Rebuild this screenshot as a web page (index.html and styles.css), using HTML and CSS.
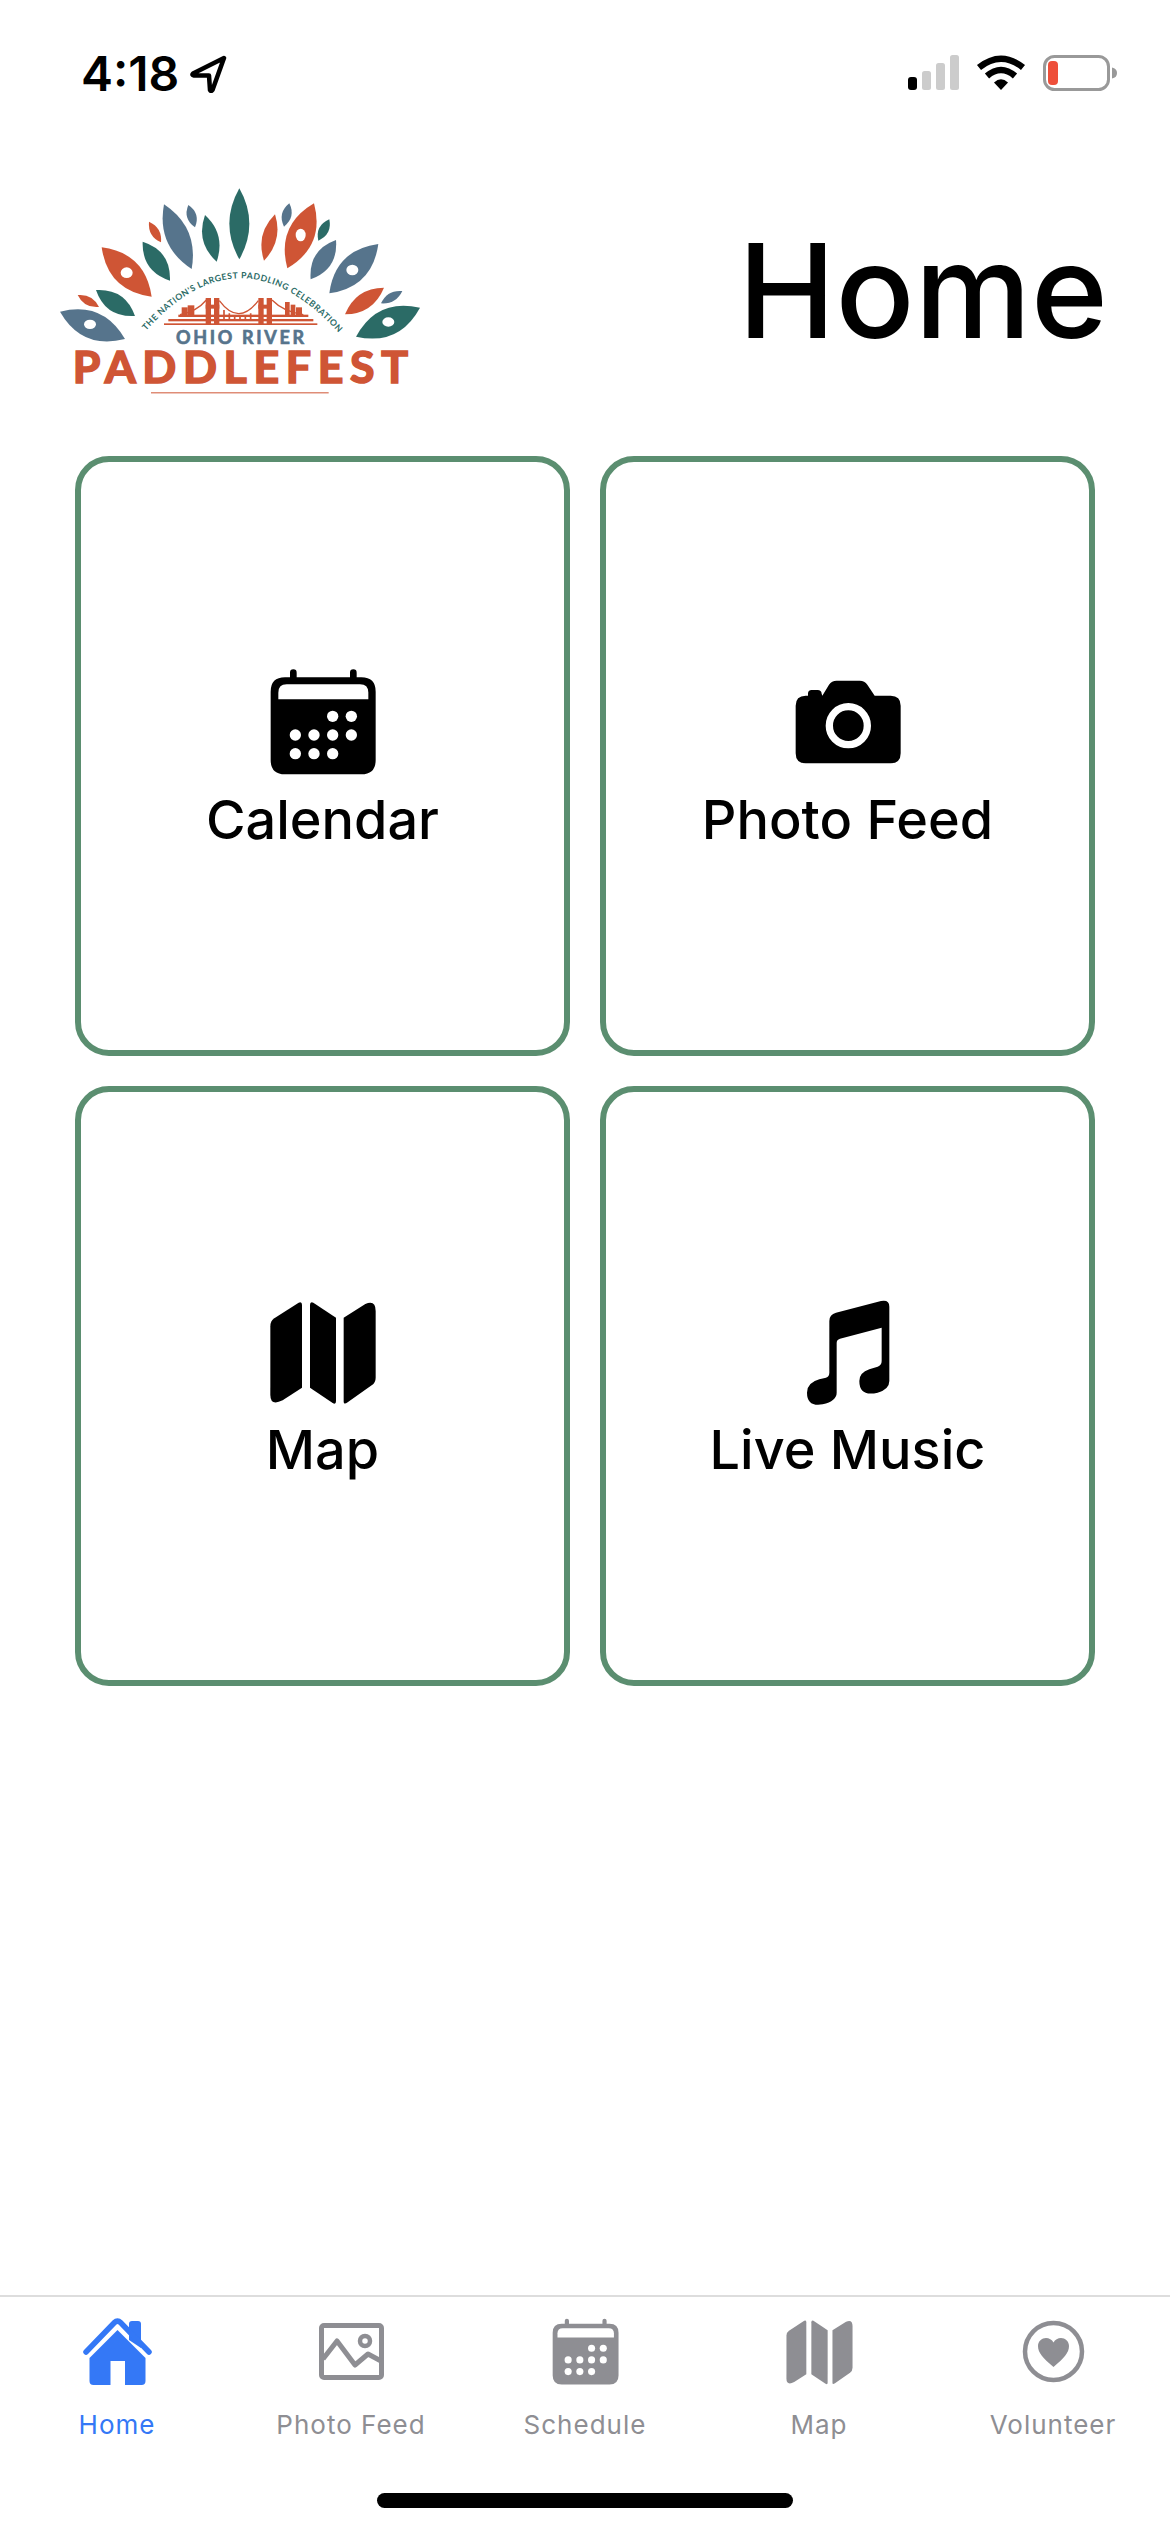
FILE: index.html
```html
<!DOCTYPE html>
<html lang="en">
<head>
    <meta charset="UTF-8">
    <meta name="viewport" content="width=device-width, initial-scale=1.0">
    <title>Home</title>
    <link rel="stylesheet" href="styles.css">
</head>
<body>

    <!-- icons used more than once -->
    <svg class="icon-defs" aria-hidden="true">
        <symbol id="icon-calendar" viewBox="260 75 330 330">
            <path fill="currentColor" d="M326 112V98a10 10 0 0 1 20 0V112H506V98a10 10 0 0 1 20 0V112H540Q583 112 583 155V360Q583 403 540 403H311Q268 403 268 360V155Q268 112 311 112Z"/>
            <path fill="#fff" d="M291 178V158Q291 133 316 133H536Q561 133 561 158V178Z"/>
            <g fill="#fff">
                <circle cx="454" cy="229" r="17"/><circle cx="510" cy="229" r="17"/>
                <circle cx="342" cy="285" r="17"/><circle cx="398" cy="285" r="17"/><circle cx="454" cy="285" r="17"/><circle cx="510" cy="285" r="17"/>
                <circle cx="342" cy="341" r="17"/><circle cx="398" cy="341" r="17"/><circle cx="454" cy="341" r="17"/>
            </g>
        </symbol>
        <symbol id="icon-map" viewBox="111 72 330 330">
            <path fill="currentColor" d="M213 102V350L155 388Q118 406 118 372V166Q118 150 130 142L203 95Q213 90 213 102Z"/>
            <path fill="currentColor" d="M237 102Q237 90 247 95L315 140V390Q315 402 305 396L237 350Z"/>
            <path fill="currentColor" d="M338 140L403 99Q434 86 434 120V320Q434 335 422 343L350 394Q338 402 338 392Z"/>
        </symbol>
    </svg>

    <div class="status-bar">
        <div class="status-left">
            <span class="status-time">4:18</span>
            <svg class="status-arrow" width="38" height="38" viewBox="0 0 38 38">
                <path d="M34 3L3 18.5Q1.5 20 4 20.5L19 20.500L20 35Q21 37 22.500 35Z" fill="none" stroke="#000" stroke-width="4.500" stroke-linejoin="round"/>
            </svg>
        </div>
        <div class="status-right">
            <svg width="51" height="36" viewBox="0 0 51 36">
                <rect x="0" y="22" width="9" height="13" rx="3" fill="#000"/>
                <rect x="14" y="16" width="9" height="19" rx="2.500" fill="#ccc"/>
                <rect x="28" y="8" width="9" height="27" rx="2.500" fill="#ccc"/>
                <rect x="42" y="0" width="9" height="35" rx="2.500" fill="#ccc"/>
            </svg>
            <svg width="50" height="36" viewBox="0 0 50 36">
                <path d="M3 12.500Q25 -5 47 12.500" fill="none" stroke="#000" stroke-width="6.500"/>
                <path d="M11 21Q25 9 39 21" fill="none" stroke="#000" stroke-width="6.500"/>
                <path d="M18 27.500Q25 21 32 27.500L25 35Z" fill="#000"/>
            </svg>
            <svg width="74" height="36" viewBox="0 0 74 36">
                <rect x="1.500" y="1.500" width="64" height="33" rx="10" fill="none" stroke="#999" stroke-width="3"/>
                <rect x="5" y="6" width="10" height="24" rx="4" fill="#ee4f3a"/>
                <path d="M69 12.500Q74 13.500 74 18Q74 22.500 69 23.500Z" fill="#999"/>
            </svg>
        </div>
    </div>

    <header class="page-header">
        <svg class="logo" width="400" height="240" viewBox="0 0 1200 720">
            <g fill="#56748c">
                <path d="M372 103Q349 227 455 297Q477 173 372 103Z"/>
                <path d="M445 105Q428 146 465 172Q482 130 445 105Z"/>
                <path d="M748 100Q712 129 732 170Q768 141 748 100Z"/>
                <path d="M888 210Q805 240 812 328Q895 298 888 210Z"/>
                <path d="M1015 222Q885 240 868 370Q997 352 1015 222Z"/>
                <path d="M1087 363Q1042 359 1023 400Q1068 403 1087 363Z"/>
                <path d="M60 425Q126 540 255 507Q188 392 60 425Z"/>
            </g>
            <g fill="#2b6b66">
                <path d="M495 135Q466 217 530 275Q558 193 495 135Z"/>
                <path d="M598 55Q538 161 598 268Q658 161 598 55Z"/>
                <path d="M868 148Q825 167 835 212Q877 193 868 148Z"/>
                <path d="M1140 413Q1011 383 948 500Q1077 529 1140 413Z"/>
                <path d="M308 215Q305 304 390 332Q393 242 308 215Z"/>
                <path d="M168 360Q196 443 285 438Q256 355 168 360Z"/>
            </g>
            <g fill="#cf5535">
                <path d="M705 133Q646 192 672 272Q730 212 705 133Z"/>
                <path d="M822 100Q708 167 742 295Q856 227 822 100Z"/>
                <path d="M1032 353Q947 354 915 433Q999 432 1032 353Z"/>
                <path d="M327 155Q323 199 363 217Q367 173 327 155Z"/>
                <path d="M185 232Q204 363 335 380Q316 249 185 232Z"/>
                <path d="M113 375Q132 415 177 411Q158 371 113 375Z"/>
            </g>
            <g fill="#fff">
                <ellipse cx="782" cy="195" rx="15" ry="19"/>
                <ellipse cx="937" cy="300" rx="18" ry="16"/>
                <ellipse cx="1045" cy="456" rx="18" ry="14"/>
                <ellipse cx="260" cy="308" rx="18" ry="16"/>
                <ellipse cx="150" cy="463" rx="18" ry="14"/>
            </g>

            <path id="tagline-curve" d="M318 482Q600 168 890 482" fill="none"/>
            <text class="logo-tagline"><textPath href="#tagline-curve" textLength="680">THE NATION'S LARGEST PADDLING CELEBRATION</textPath></text>

            <!-- bridge -->
            <g fill="#cf5535">
                <rect x="425" y="412" width="18" height="26"/>
                <rect x="443" y="406" width="20" height="32"/>
                <rect x="735" y="396" width="14" height="42"/>
                <rect x="752" y="404" width="14" height="34"/>
                <rect x="768" y="412" width="18" height="26"/>
                <rect x="497" y="384" width="16" height="78"/>
                <rect x="522" y="384" width="16" height="78"/>
                <rect x="497" y="404" width="41" height="12"/>
                <rect x="655" y="384" width="16" height="78"/>
                <rect x="680" y="384" width="16" height="78"/>
                <rect x="655" y="404" width="41" height="12"/>
                <rect x="415" y="434" width="390" height="7"/>
                <rect x="385" y="447" width="435" height="7"/>
                <rect x="372" y="460" width="460" height="5"/>
            </g>
            <g fill="none" stroke="#cf5535" stroke-width="4">
                <path d="M420 434Q470 425 499 390"/>
                <path d="M538 392Q596 470 655 392"/>
                <path d="M696 390Q730 425 790 434"/>
                <path d="M552 420V450M568 430V450M584 436V450M600 438V450M616 436V450M632 430V450" stroke-width="5"/>
            </g>

            <text class="logo-river" x="408" y="522" textLength="384">OHIO RIVER</text>
            <text class="logo-name" x="98" y="639" textLength="1006">PADDLEFEST</text>
            <rect x="333" y="667" width="533" height="3" fill="#cf5535"/>
        </svg>
        <h1 class="page-title">Home</h1>
    </header>

    <main class="menu-grid">
        <a class="menu-card">
            <svg class="menu-icon"><use href="#icon-calendar"/></svg>
            <span class="menu-label">Calendar</span>
        </a>
        <a class="menu-card">
            <svg class="menu-icon" viewBox="305 45 330 330">
                <path d="M343 137H350V131Q350 120 361 120H379Q390 120 391 131L393 137L413 104Q421 92 436 92H505Q520 92 528 104L550 137H598Q628 137 628 167V310Q628 340 598 340H343Q313 340 313 310V167Q313 137 343 137Z"/>
                <circle cx="471" cy="227" r="57" fill="none" stroke="#fff" stroke-width="22"/>
            </svg>
            <span class="menu-label">Photo Feed</span>
        </a>
        <a class="menu-card">
            <svg class="menu-icon"><use href="#icon-map"/></svg>
            <span class="menu-label">Map</span>
        </a>
        <a class="menu-card">
            <svg class="menu-icon" viewBox="306 72 330 330">
                <path d="M415 150Q415 130 435 125L570 90Q595 85 595 107V330Q595 355 560 365Q505 378 505 330Q505 305 535 295L560 287Q572 283 572 270V170L447 203Q437 206 437 216V365Q437 390 395 400Q348 408 348 365Q348 335 385 325L405 320Q415 317 415 305Z"/>
            </svg>
            <span class="menu-label">Live Music</span>
        </a>
    </main>

    <nav class="tab-bar">
        <a class="tab-item active">
            <svg class="tab-icon" viewBox="0 0 69 69">
                <path d="M46 24V8Q46 5 49 5H55Q58 5 58 8V32Z" fill="currentColor"/>
                <path d="M3 36L31.500 6.500Q34.500 3.500 37.500 6.500L66 36" fill="none" stroke="currentColor" stroke-width="5.500" stroke-linecap="round" stroke-linejoin="round"/>
                <path d="M34.500 14L62.500 42V65Q62.500 69 58.500 69H42V45H27.500V69H10.500Q6.500 69 6.500 65V42Z" fill="currentColor"/>
            </svg>
            <span class="tab-label">Home</span>
        </a>
        <a class="tab-item">
            <svg class="tab-icon" viewBox="0 0 69 69">
                <rect x="4.500" y="9.500" width="60" height="52" rx="2.500" fill="none" stroke="currentColor" stroke-width="5"/>
                <path d="M6 43L20 25L38 49L51 38L64 45" fill="none" stroke="currentColor" stroke-width="5" stroke-linejoin="round"/>
                <circle cx="48" cy="25" r="5" fill="none" stroke="currentColor" stroke-width="4.500"/>
            </svg>
            <span class="tab-label">Photo Feed</span>
        </a>
        <a class="tab-item">
            <svg class="tab-icon"><use href="#icon-calendar"/></svg>
            <span class="tab-label">Schedule</span>
        </a>
        <a class="tab-item">
            <svg class="tab-icon"><use href="#icon-map"/></svg>
            <span class="tab-label">Map</span>
        </a>
        <a class="tab-item">
            <svg class="tab-icon" viewBox="0 0 69 69">
                <circle cx="34.500" cy="35.500" r="28.500" fill="none" stroke="currentColor" stroke-width="4.500"/>
                <path d="M34.500 51C24 42 19 37 19 30C19 25 23 22 27 22C30 22 33 23.500 34.500 26.500C36 23.500 39 22 42 22C46 22 50 25 50 30C50 37 45 42 34.500 51Z" fill="currentColor"/>
            </svg>
            <span class="tab-label">Volunteer</span>
        </a>
    </nav>

    <div class="home-bar"><div class="home-indicator"></div></div>

</body>
</html>
```

FILE: styles.css
```css
body {
    margin: 0;
    width: 1170px;
    height: 2532px;
    display: flex;
    flex-direction: column;
    background-color: #fff;
    color: #000;
    font-family: Inter, "Noto Sans", sans-serif;
    overflow: hidden;
}

.icon-defs {
    display: none;
}

/* Status bar */
.status-bar {
    height: 110px;
    box-sizing: border-box;
    padding: 55px 53px 0 81px;
    display: flex;
    justify-content: space-between;
    align-items: flex-start;
}

.status-left {
    display: flex;
    align-items: center;
    gap: 11px;
    height: 38px;
}

.status-time {
    font-size: 48px;
    font-weight: 600;
    line-height: 38px;
}

.status-right {
    display: flex;
    gap: 17px;
    margin-left: auto;
}

/* Header */
.page-header {
    height: 240px;
    padding-top: 60px;
    padding-left: 40px;
    padding-right: 62px;
    display: flex;
    justify-content: space-between;
    align-items: center;
}

.logo {
    display: block;
}

.logo-tagline {
    font-family: Lato, sans-serif;
    font-size: 26px;
    font-weight: 700;
    fill: #2b6b66;
}

.logo-river {
    font-family: Lato, sans-serif;
    font-size: 54px;
    font-weight: 700;
    fill: #56748c;
    stroke: #56748c;
    stroke-width: 2px;
}

.logo-name {
    font-family: Lato, sans-serif;
    font-size: 134px;
    font-weight: 700;
    fill: #cf5535;
    stroke: #cf5535;
    stroke-width: 5px;
}

.page-title {
    margin: 0;
    font-size: 131px;
    font-weight: 500;
    line-height: 1;
}

/* Menu cards */
.menu-grid {
    flex: 1;
    margin-top: 46px;
    padding-left: 75px;
    display: grid;
    grid-template-columns: 495px 495px;
    grid-auto-rows: 600px;
    gap: 30px;
    align-content: start;
}

.menu-card {
    border: 6px solid #5b8e70;
    border-radius: 34px;
    display: flex;
    flex-direction: column;
    align-items: center;
    padding-top: 203px;
}

.menu-icon {
    width: 110px;
    height: 110px;
    display: block;
}

.menu-label {
    margin-top: 13px;
    font-size: 54px;
    font-weight: 500;
    line-height: 64px;
}

/* Tab bar */
.tab-bar {
    height: 164px;
    box-sizing: border-box;
    border-top: 2px solid #ddd;
    display: flex;
    padding-top: 19px;
}

.tab-item {
    flex: 1;
    display: flex;
    flex-direction: column;
    align-items: center;
    color: #8e8e93;
}

.tab-item.active {
    color: #3478f6;
}

.tab-icon {
    width: 69px;
    height: 69px;
    display: block;
}

.tab-label {
    margin-top: 24px;
    font-size: 26px;
    line-height: 32px;
    letter-spacing: 1px;
}

.home-bar {
    height: 73px;
    display: flex;
    justify-content: center;
}

.home-indicator {
    width: 416px;
    height: 15px;
    margin-top: 34px;
    border-radius: 8px;
    background-color: #000;
}
```
